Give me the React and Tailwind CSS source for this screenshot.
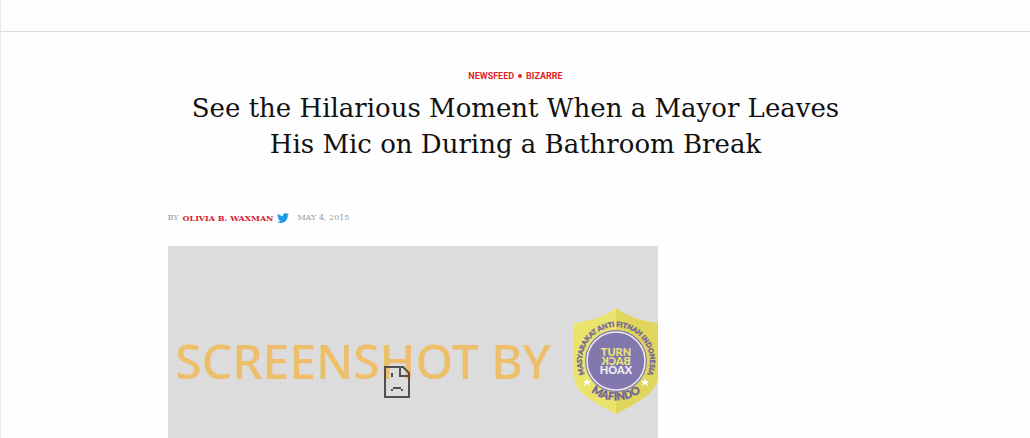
import React from 'react';

const TwitterIcon = () => (
    <svg viewBox="0 0 24 24" className="h-3 w-3" fill="#1b9bea" aria-hidden="true">
        <path d="M23.95 4.57a10 10 0 0 1-2.82.77 4.96 4.96 0 0 0 2.16-2.72c-.95.55-2 .95-3.13 1.18a4.92 4.92 0 0 0-8.38 4.48C7.69 8.1 4.07 6.13 1.64 3.16a4.82 4.82 0 0 0-.67 2.48c0 1.71.87 3.21 2.19 4.1a4.9 4.9 0 0 1-2.23-.62v.06a4.92 4.92 0 0 0 3.95 4.83 5 5 0 0 1-2.21.08 4.94 4.94 0 0 0 4.6 3.42A9.87 9.87 0 0 1 0 19.54a14 14 0 0 0 7.55 2.21c9.05 0 14-7.5 14-13.98 0-.21 0-.42-.02-.63a9.94 9.94 0 0 0 2.46-2.55z" />
    </svg>
);

const BrokenFile = () => (
    <svg viewBox="0 0 26 32" className="h-8 w-[26px]" fill="none" stroke="#505050" strokeWidth="2" aria-hidden="true">
        <path d="M17 1H1v30h24V9M16 0v10h9M17 1h2l6 6v3" />
        <path d="M8 7v4M9 22h8M7 24h2M17 24h2" />
    </svg>
);

const Badge = () => (
    <svg viewBox="0 0 84 106" className="h-[106px] w-21" role="img" aria-label="Mafindo">
        <defs>
            <path id="badge-top" d="M12.6 70A34 34 0 1 1 71.4 70" />
            <path id="badge-bottom" d="M9 75A40 40 0 0 0 75 75" />
        </defs>
        <path d="M42 0C30 9 16 13 0 15V67C0 84 16 92 42 106Z" fill="#ebe46c" />
        <path d="M42 0C54 9 68 13 84 15V67C84 84 68 92 42 106Z" fill="#e0d65b" />
        <circle cx="42" cy="53" r="31" fill="#8378ae" />
        <circle cx="42" cy="53" r="29" fill="#8378ae" stroke="#eeeef2" strokeWidth="1.5" />
        <g fontFamily="Lato, sans-serif" fontWeight="900" fill="#75679a" stroke="#75679a" strokeWidth="0.4">
            <text fontSize="7">
                <textPath href="#badge-top" startOffset="50%" textAnchor="middle">MASYARAKAT ANTI FITNAH INDONESIA</textPath>
            </text>
            <text fontSize="11">
                <textPath href="#badge-bottom" startOffset="50%" textAnchor="middle">MAFINDO</textPath>
            </text>
        </g>
        <g fontFamily="Lato, sans-serif" fontWeight="900" fontSize="11" textAnchor="middle">
            <text x="42" y="48" fill="#eae477">TURN</text>
            <text x="-42" y="57" fill="#eae477" transform="scale(-1 1)">BACK</text>
            <text x="42" y="66" fill="#f0eff5">HOAX</text>
        </g>
        <path d="m13 70 1 3h3l-2 2 1 3-3-2-3 2 1-3-2-2h3zM71 70l1 3h3l-2 2 1 3-3-2-3 2 1-3-2-2h3z" fill="#fff" />
    </svg>
);

export default function App() {
    return (
        <div className="min-h-screen overflow-hidden border-l border-[#e8e8e8] bg-[#fefefe] font-['DejaVu_Serif',serif]">
            <header className="h-8 border-b border-[#dcdcdc]" />
            <main className="mx-auto max-w-[696px] pt-9">
                <nav className="flex items-center justify-center gap-1 font-[Roboto,sans-serif] text-[9px] leading-4 font-bold text-[#e0252b]">
                    <a href="#newsfeed">NEWSFEED</a>
                    <span className="h-1 w-1 rounded-full bg-[#e0252b]" />
                    <a href="#bizarre">BIZARRE</a>
                </nav>
                <h1 className="mt-1.5 text-center text-[26px] leading-9 text-[#111]">
                    See the Hilarious Moment When a Mayor Leaves
                    <br />
                    His Mic on During a Bathroom Break
                </h1>
                <div className="mt-12 flex items-center text-[8px] leading-4 text-[#999]">
                    <span>BY</span>
                    <a href="#author" className="ml-1 font-bold text-[#d9232e]">OLIVIA B. WAXMAN</a>
                    <a href="#twitter" aria-label="Twitter" className="ml-1"><TwitterIcon /></a>
                    <time dateTime="2015-05-04" className="ml-2">MAY 4, 2015</time>
                </div>
                <figure className="relative mt-5 h-48 w-[490px] max-w-full overflow-hidden bg-[#dcdcdc]">
                    <div className="flex items-center justify-between pt-[62px] pl-2">
                        <span className="font-['Noto_Sans',sans-serif] text-[48px] leading-none font-medium whitespace-nowrap text-[#edbf6b]">SCREENSHOT BY</span>
                        <Badge />
                    </div>
                    <div className="absolute inset-x-0 top-[120px] flex justify-center pr-8">
                        <BrokenFile />
                    </div>
                </figure>
            </main>
        </div>
    );
}
